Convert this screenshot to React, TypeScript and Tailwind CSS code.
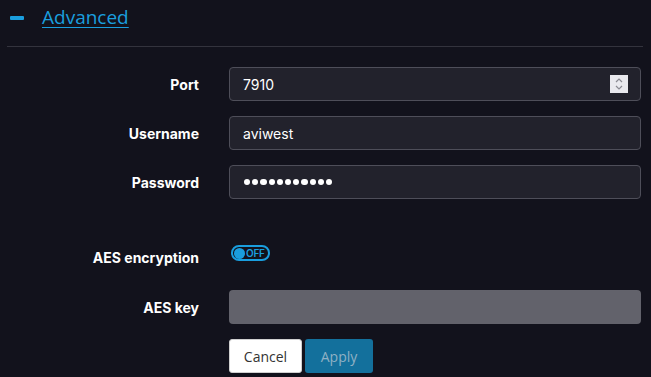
import React from "react";

const label = "w-[199px] text-right text-[14px] font-bold text-white";

function Row({ name, children, className = "", labelClass = "" }: { name: string; children: React.ReactNode; className?: string; labelClass?: string }) {
  return (
    <div className={"flex items-center h-[34px] " + className}>
      <div className={label + " " + labelClass}>{name}</div>
      <div className="ml-[30px] flex-1 mr-[10px] h-full">{children}</div>
    </div>
  );
}

export default function App() {
  return (
    <div className="w-[651px] h-[377px] bg-[#12121c] overflow-hidden" style={{ fontFamily: "Inter, 'Noto Sans', sans-serif" }}>
      <div className="flex items-center h-[35px]">
        <div className="ml-[10px] w-[14px] h-[4px] rounded-[1px] bg-[#1a9ede]" />
        <a className="ml-[18px] text-[19px] text-[#1a9ede] underline underline-offset-[3px] decoration-1 leading-none" style={{ fontFamily: "'Open Sans', sans-serif" }}>
          Advanced
        </a>
      </div>
      <div className="mt-[11px] ml-[7px] mr-[8px] h-px bg-[#33333d]" />

      <Row name="Port" className="mt-[20px]">
        <div className="h-full rounded-[4px] border border-[#4e4e59] bg-[#22222c] flex items-center pl-[13px] pr-[12px]">
          <span className="flex-1 text-[14px] text-white">7910</span>
          <div className="w-[18px] h-[18px] bg-[#e9e9ee] flex flex-col items-center justify-center">
            <svg width="10" height="14" viewBox="0 0 10 14" fill="none" stroke="#8a8a92" strokeWidth="1.2">
              <path d="M2 5 L5 2 L8 5" />
              <path d="M2 9 L5 12 L8 9" />
            </svg>
          </div>
        </div>
      </Row>

      <Row name="Username" className="mt-[15px]">
        <div className="h-full rounded-[4px] border border-[#4e4e59] bg-[#22222c] flex items-center pl-[13px]">
          <span className="text-[14px] text-white">aviwest</span>
        </div>
      </Row>

      <Row name="Password" className="mt-[15px]">
        <div className="h-full rounded-[4px] border border-[#4e4e59] bg-[#22222c] flex items-center pl-[14px] gap-[2px]">
          {Array.from({ length: 11 }).map((_, i) => (
            <div key={i} className="w-[6.2px] h-[6.2px] rounded-full bg-white" />
          ))}
        </div>
      </Row>

      <Row name="AES encryption" className="mt-[37px]" labelClass="translate-y-[4px]">
        <div className="h-full flex items-center">
          <div className="ml-[2px] w-[39px] h-[16px] rounded-full border-2 border-[#1a9ede] flex items-center pl-[1px]">
            <div className="w-[11px] h-[11px] rounded-full bg-[#1a9ede]" />
            <span className="ml-[1px] text-[10px] font-semibold text-[#1a9ede] leading-none tracking-[-0.3px]">OFF</span>
          </div>
        </div>
      </Row>

      <Row name="AES key" className="mt-[20px]">
        <div className="h-full rounded-[4px] bg-[#62626b]" />
      </Row>

      <div className="flex mt-[15px] ml-[229px] h-[34px] gap-[3px]">
        <button className="w-[73px] h-full rounded-[3px] bg-white border border-[#d0d0d0] text-[14px] text-[#333]" style={{ fontFamily: "'Open Sans', sans-serif" }}>
          Cancel
        </button>
        <button className="w-[68px] h-full rounded-[3px] bg-[#13709c] text-[14px] text-[#8fb0c4]" style={{ fontFamily: "'Open Sans', sans-serif" }}>
          Apply
        </button>
      </div>
    </div>
  );
}
